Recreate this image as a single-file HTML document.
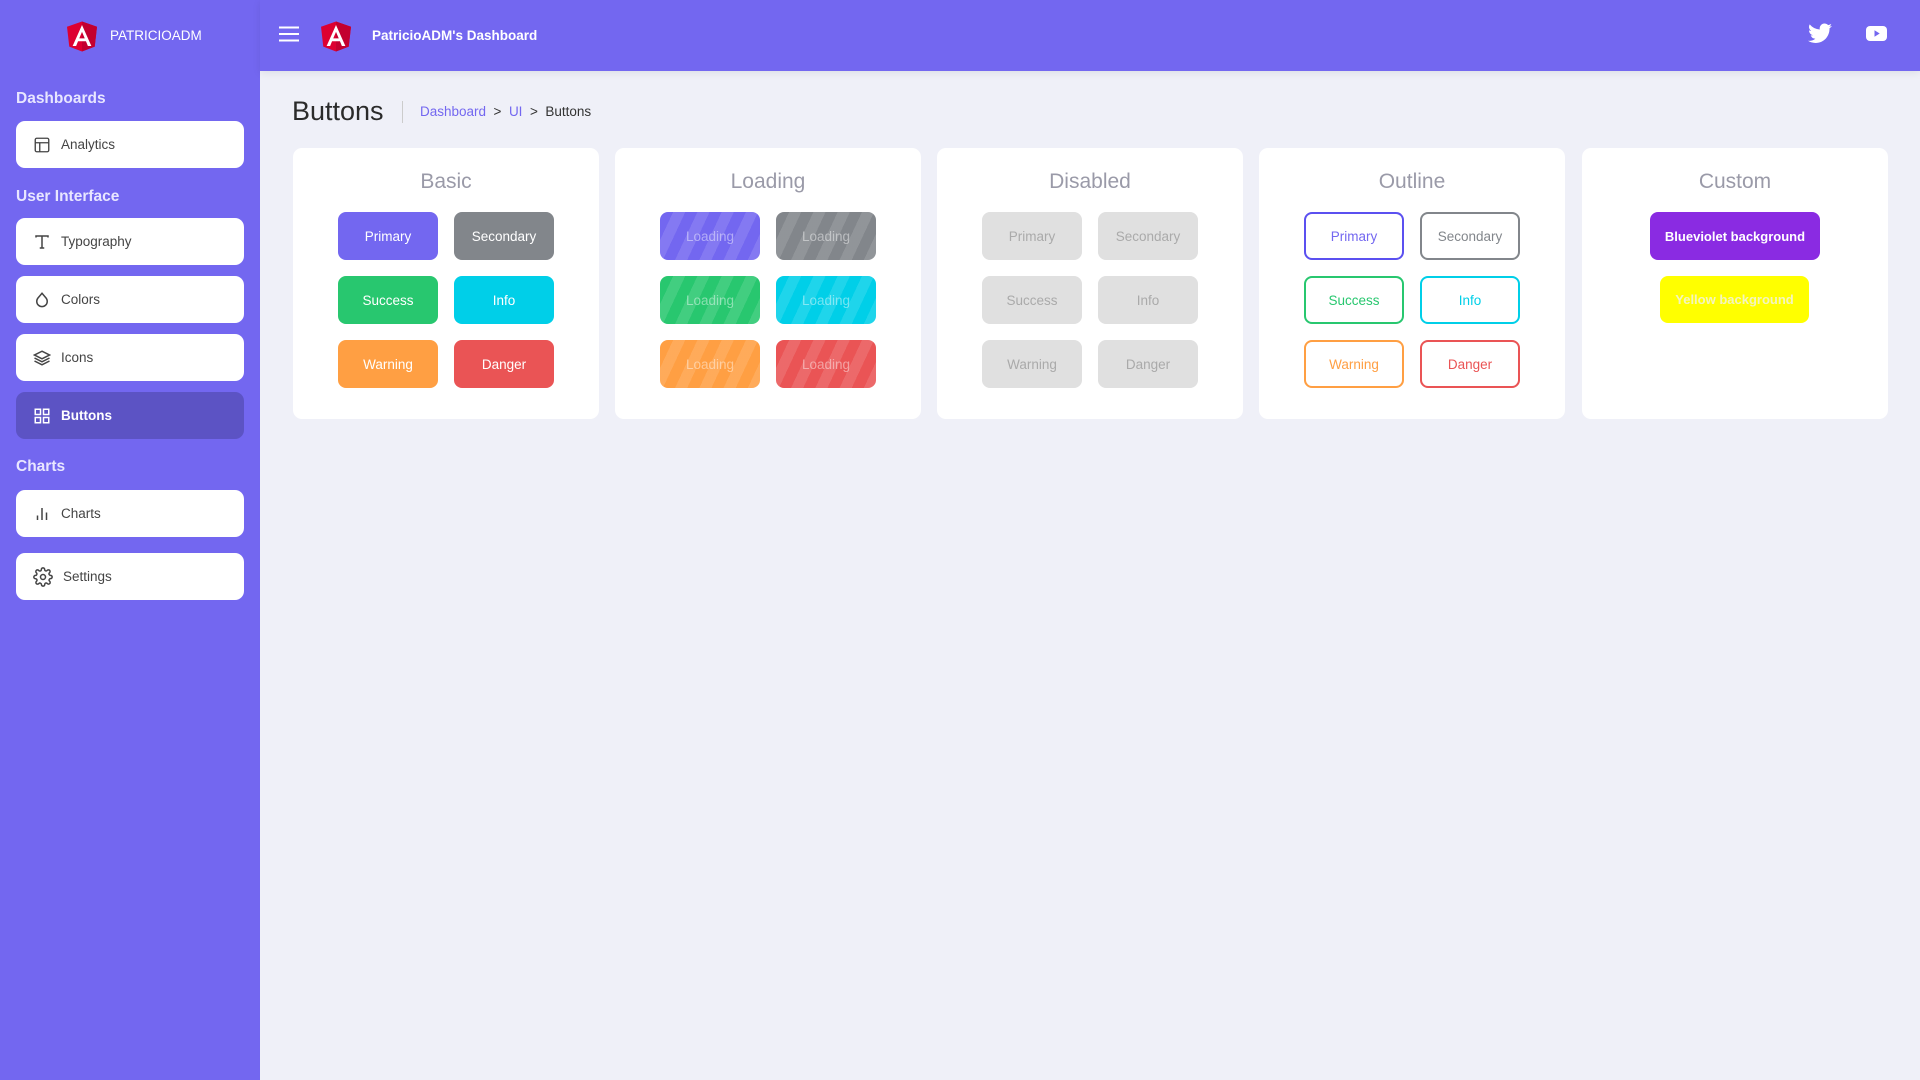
<!DOCTYPE html>
<html><head><meta charset="utf-8">
<style>
*{box-sizing:border-box;margin:0;padding:0}
body{width:1920px;height:1080px;overflow:hidden;background:#eff0f8;font-family:"Liberation Sans",sans-serif;position:relative}
.side{position:absolute;left:0;top:0;width:260px;height:1080px;background:#7367f0}
.head{position:absolute;left:260px;top:0;right:0;height:71px;background:#7367f0;box-shadow:0 2px 8px rgba(0,0,0,.08)}
.logo{position:absolute}
.brand{position:absolute;left:110px;top:28px;color:#fff;font-size:13.5px}
.sec{position:absolute;left:16px;color:#e8e6ff;font-weight:bold;font-size:15.5px}
.nav{position:absolute;left:16px;width:228px;height:47px;background:#fff;border-radius:9px;display:flex;align-items:center;padding-left:17px;font-size:13.5px;color:#444}
.nav svg{margin-right:10px}
.nav.act{background:#5c53c4;color:#fff;font-weight:bold}
.title{position:absolute;left:292px;top:96px;font-size:27px;color:#2b2b2b}
.sep{position:absolute;left:402px;top:101px;width:1px;height:22px;background:#ccc}
.bc{position:absolute;left:420px;top:104px;font-size:13.5px;color:#333}
.bc a{color:#7367f0;text-decoration:none}
.card{position:absolute;top:148px;width:306px;height:271px;background:#fff;border-radius:9px}
.card h3{position:absolute;top:22px;width:100%;text-align:center;font-weight:normal;font-size:21px;color:#9a9aa8}
.grid{position:absolute;left:45px;top:64px;display:grid;grid-template-columns:100px 100px;gap:16px;}
.b{width:100px;height:48px;border-radius:8px;display:flex;align-items:center;justify-content:center;font-size:13.5px;color:#fff}
.p{background:#7367f0}.s{background:#82868b}.g{background:#28c76f}.i{background:#00cfe8}.w{background:#ff9f43}.d{background:#ea5455}
.ld{color:rgba(255,255,255,.45);background-image:repeating-linear-gradient(-65deg,rgba(255,255,255,.12) 0 11px,transparent 11px 22px)}
.dis{background:#e0e0e0;color:#aaa}
.o{background:#fff;border:2px solid}
</style></head><body>
<div class="side">
<svg class="logo" style="left:67px;top:21px" width="30" height="31" viewBox="0 0 250 250"><path fill="#dd0031" d="M125 0L0 44l19 165 106 41 106-41 19-165z"/><path fill="#c3002f" d="M125 0v250l106-41 19-165z"/><path fill="#fff" d="M125 29L47 204h29l16-39h66l16 39h29L125 29zm23 112h-46l23-55z"/></svg>
<div class="brand">PATRICIOADM</div>
<div class="sec" style="top:90px">Dashboards</div>
<div class="nav" style="top:121px"><svg width="18" height="18" viewBox="0 0 24 24" fill="none" stroke="#444" stroke-width="1.8"><rect x="3" y="3" width="18" height="18" rx="2"/><path d="M3 9h18M9 9v12"/></svg>Analytics</div>
<div class="sec" style="top:188px">User Interface</div>
<div class="nav" style="top:218px"><svg width="18" height="18" viewBox="0 0 24 24" fill="none" stroke="#444" stroke-width="2"><path d="M4 6V4h16v2M12 4v16M9 20h6"/></svg>Typography</div>
<div class="nav" style="top:276px"><svg width="18" height="18" viewBox="0 0 24 24" fill="none" stroke="#444" stroke-width="2"><path d="M12 3l5.5 6.5a7 7 0 1 1-11 0z"/></svg>Colors</div>
<div class="nav" style="top:334px"><svg width="18" height="18" viewBox="0 0 24 24" fill="none" stroke="#444" stroke-width="2"><path d="M12 3L2 8l10 5 10-5zM2 12l10 5 10-5M2 16l10 5 10-5"/></svg>Icons</div>
<div class="nav act" style="top:392px"><svg width="18" height="18" viewBox="0 0 24 24" fill="none" stroke="#fff" stroke-width="2"><rect x="3" y="3" width="7" height="7"/><rect x="14" y="3" width="7" height="7"/><rect x="3" y="14" width="7" height="7"/><rect x="14" y="14" width="7" height="7"/></svg>Buttons</div>
<div class="sec" style="top:458px">Charts</div>
<div class="nav" style="top:490px"><svg width="18" height="18" viewBox="0 0 24 24" fill="none" stroke="#444" stroke-width="2"><path d="M6 20v-6M12 20V4M18 20v-10"/></svg>Charts</div>
<div class="nav" style="top:553px"><svg width="20" height="20" viewBox="0 0 24 24" fill="none" stroke="#444" stroke-width="1.8"><circle cx="12" cy="12" r="3"/><path d="M19.4 15a1.7 1.7 0 0 0 .3 1.8l.1.1a2 2 0 1 1-2.8 2.8l-.1-.1a1.7 1.7 0 0 0-1.800-.3 1.7 1.7 0 0 0-1 1.5V21a2 2 0 1 1-4 0v-.1a1.7 1.7 0 0 0-1.1-1.5 1.7 1.7 0 0 0-1.8.3l-.1.1a2 2 0 1 1-2.8-2.8l.1-.1a1.7 1.7 0 0 0 .3-1.8 1.7 1.7 0 0 0-1.5-1H3a2 2 0 1 1 0-4h.1a1.7 1.7 0 0 0 1.5-1.1 1.7 1.7 0 0 0-.3-1.8l-.1-.1a2 2 0 1 1 2.8-2.8l.1.1a1.7 1.7 0 0 0 1.8.3H9a1.7 1.7 0 0 0 1-1.5V3a2 2 0 1 1 4 0v.1a1.7 1.7 0 0 0 1 1.5 1.7 1.7 0 0 0 1.8-.3l.1-.1a2 2 0 1 1 2.8 2.8l-.1.1a1.7 1.7 0 0 0-.3 1.8V9a1.7 1.7 0 0 0 1.5 1H21a2 2 0 1 1 0 4h-.1a1.7 1.7 0 0 0-1.5 1z"/></svg>Settings</div>
</div>
<div class="head">
<svg style="position:absolute;left:19px;top:26px" width="20" height="16" viewBox="0 0 20 16"><path d="M0 1.5h20M0 8h20M0 14.5h20" stroke="#fff" stroke-width="2"/></svg>
<svg class="logo" style="left:61px;top:21px" width="30" height="31" viewBox="0 0 250 250"><path fill="#dd0031" d="M125 0L0 44l19 165 106 41 106-41 19-165z"/><path fill="#c3002f" d="M125 0v250l106-41 19-165z"/><path fill="#fff" d="M125 29L47 204h29l16-39h66l16 39h29L125 29zm23 112h-46l23-55z"/></svg>
<div style="position:absolute;left:112px;top:28px;color:#fff;font-weight:bold;font-size:13.5px">PatricioADM's Dashboard</div>
<svg style="position:absolute;left:1548px;top:23px" width="24" height="21" viewBox="0 0 24 20"><path fill="#fff" d="M24 2.4a9.8 9.8 0 0 1-2.8.8A4.9 4.9 0 0 0 23.3.4a9.8 9.8 0 0 1-3.1 1.2A4.9 4.9 0 0 0 11.8 6 14 14 0 0 1 1.7.9a4.9 4.9 0 0 0 1.5 6.6A4.9 4.9 0 0 1 1 6.9a4.9 4.9 0 0 0 3.900 4.8 4.9 4.9 0 0 1-2.2.1 4.9 4.9 0 0 0 4.6 3.4A9.9 9.9 0 0 1 0 17.3 14 14 0 0 0 7.5 19.5c9.1 0 14-7.5 14-14v-.6A10 10 0 0 0 24 2.4z"/></svg>
<svg style="position:absolute;left:1606px;top:26px" width="21" height="15" viewBox="0 0 21 15"><rect width="21" height="15" rx="4" fill="#fff"/><path d="M8.5 4.3v6.4l5.2-3.2z" fill="#7367f0"/></svg>
</div>
<div class="title">Buttons</div><div class="sep"></div>
<div class="bc"><a>Dashboard</a>&nbsp; &gt; &nbsp;<a>UI</a>&nbsp; &gt; &nbsp;Buttons</div>

<div class="card" style="left:293px"><h3>Basic</h3><div class="grid">
<div class="b p">Primary</div><div class="b s">Secondary</div><div class="b g">Success</div><div class="b i">Info</div><div class="b w">Warning</div><div class="b d">Danger</div></div></div>
<div class="card" style="left:615px"><h3>Loading</h3><div class="grid">
<div class="b p ld">Loading</div><div class="b s ld">Loading</div><div class="b g ld">Loading</div><div class="b i ld">Loading</div><div class="b w ld">Loading</div><div class="b d ld">Loading</div></div></div>
<div class="card" style="left:937px"><h3>Disabled</h3><div class="grid">
<div class="b dis">Primary</div><div class="b dis">Secondary</div><div class="b dis">Success</div><div class="b dis">Info</div><div class="b dis">Warning</div><div class="b dis">Danger</div></div></div>
<div class="card" style="left:1259px"><h3>Outline</h3><div class="grid">
<div class="b o" style="color:#7367f0;border-color:#5b50f0">Primary</div><div class="b o" style="color:#82868b;border-color:#82868b">Secondary</div><div class="b o" style="color:#28c76f;border-color:#28c76f">Success</div><div class="b o" style="color:#00cfe8;border-color:#00cfe8">Info</div><div class="b o" style="color:#ff9f43;border-color:#ff9f43">Warning</div><div class="b o" style="color:#ea5455;border-color:#ea5455">Danger</div></div></div>
<div class="card" style="left:1582px"><h3>Custom</h3>
<div class="b" style="position:absolute;left:68px;top:64px;width:170px;background:#8a2be2;font-weight:bold;font-size:13px">Blueviolet background</div>
<div class="b" style="position:absolute;left:78px;top:128px;width:149px;height:47px;background:#ffff00;color:#f4f4c0;font-weight:bold;font-size:13px">Yellow background</div>
</div>
</body></html>
